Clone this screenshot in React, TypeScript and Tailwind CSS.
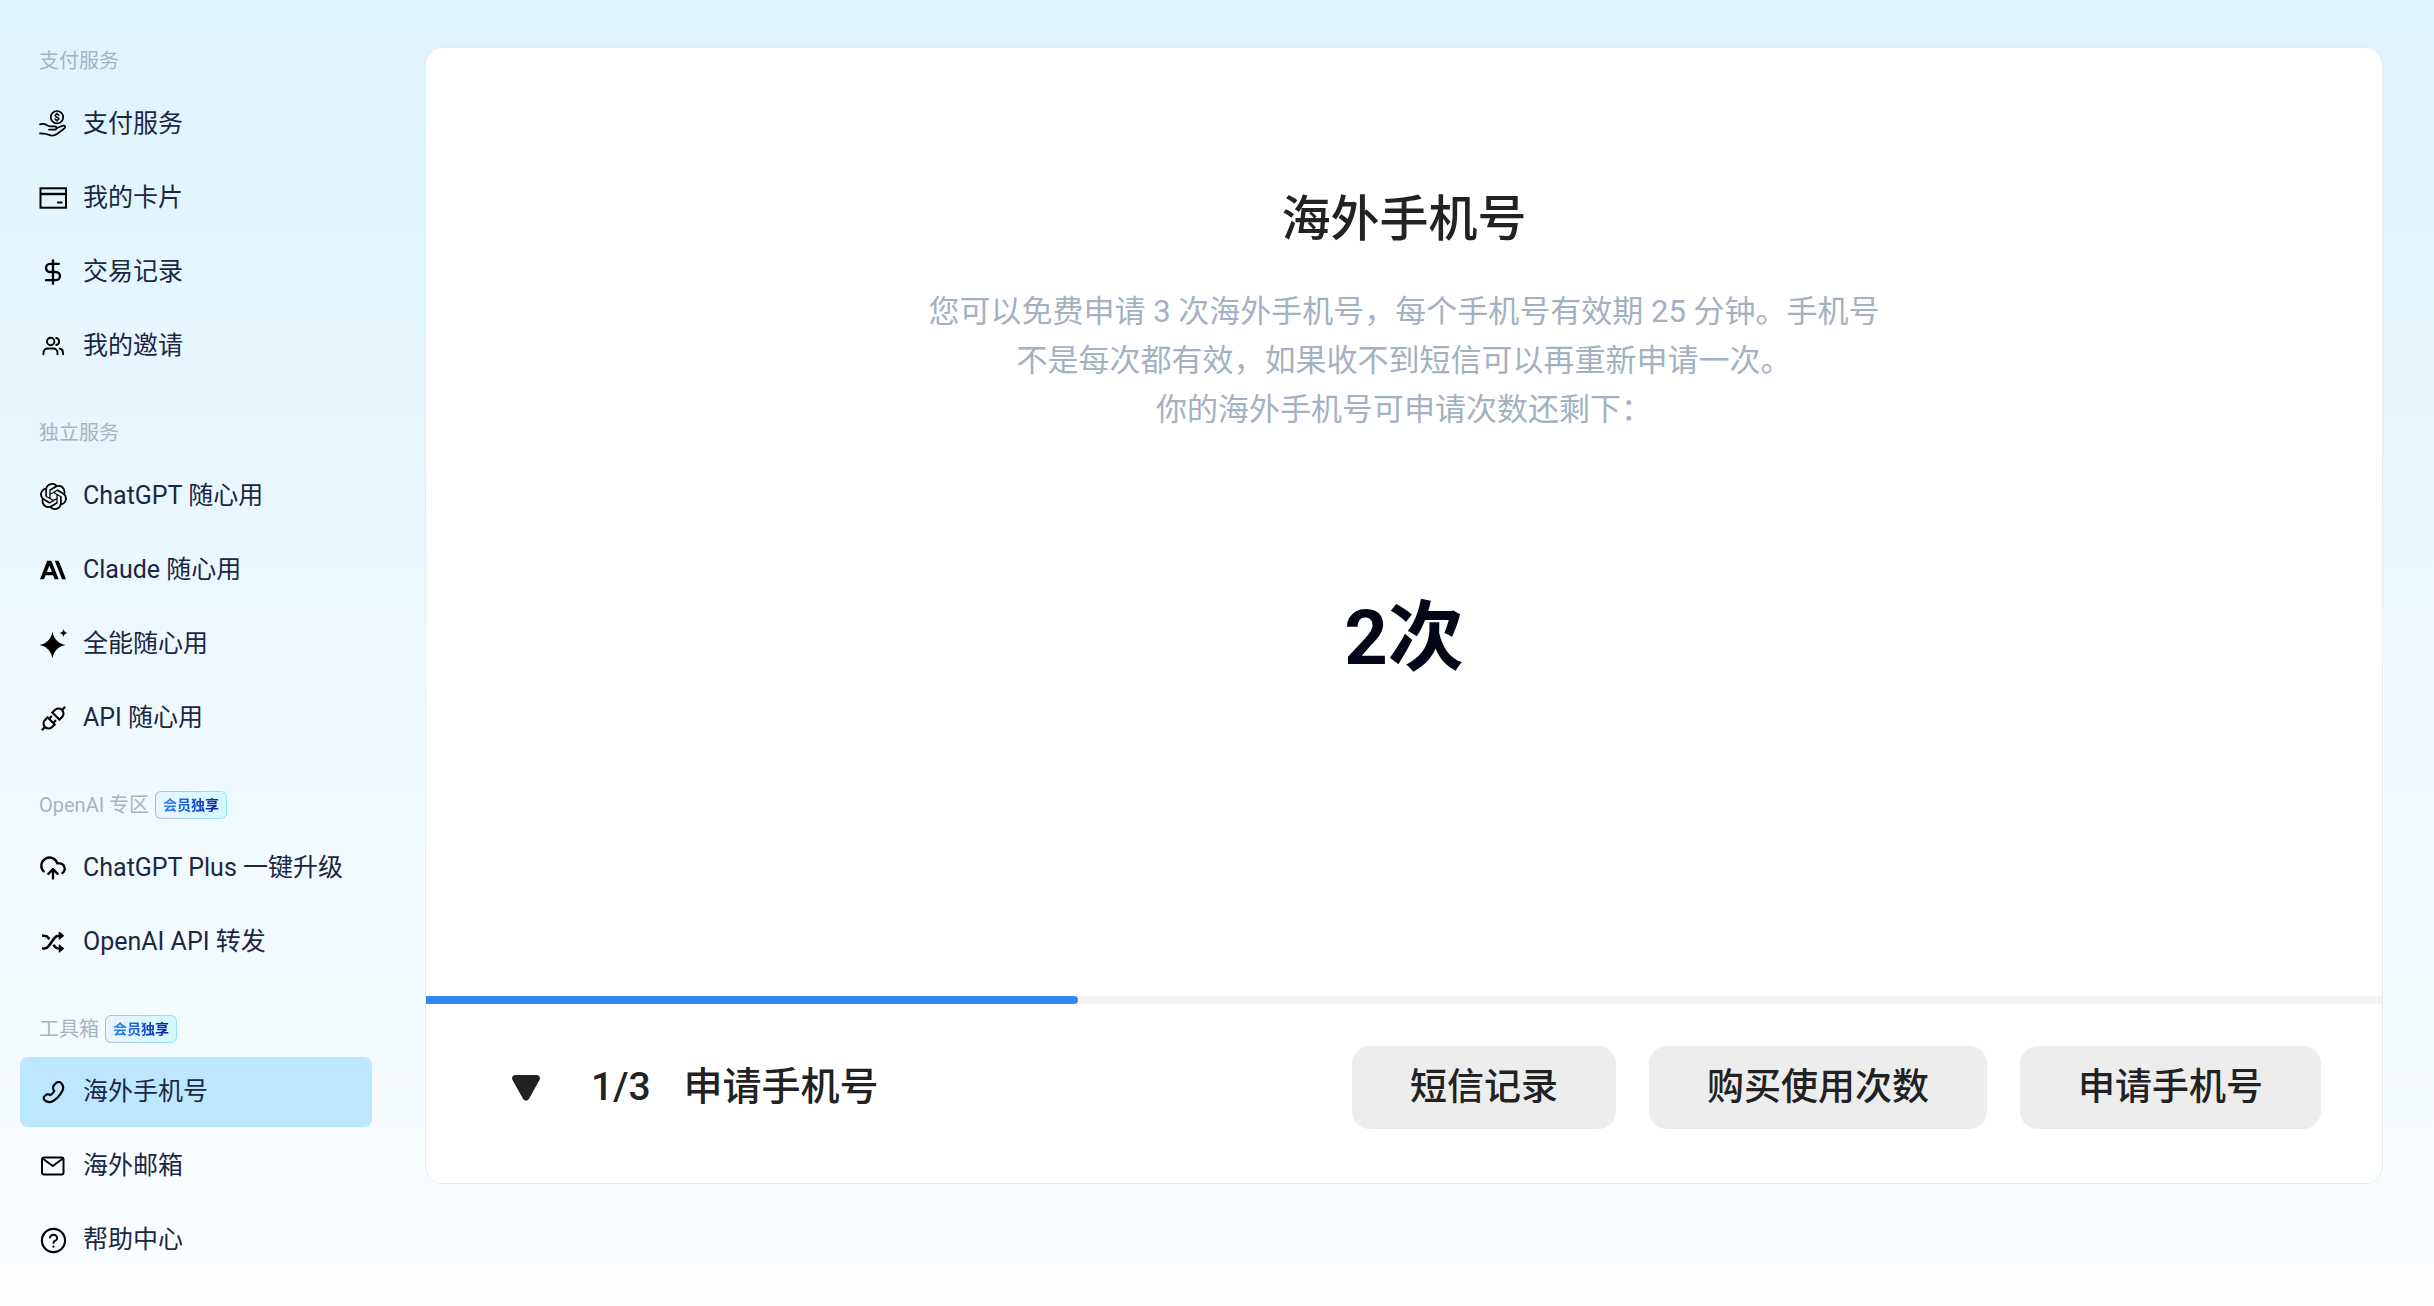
import type { ReactNode } from 'react';
import { CloudUpload, DollarSign } from 'lucide-react';
import { AiOutlineApi, AiOutlineQuestionCircle } from 'react-icons/ai';
import { SiAnthropic, SiOpenai } from 'react-icons/si';

type Item = { label: string; icon: ReactNode; active?: boolean };
type Group = { title: string; badge?: boolean; items: Item[] };

function HandCoinIcon() {
  return (
    <svg viewBox="0 0 28 28" className="size-7" fill="none" stroke="currentColor" strokeWidth="1.7" strokeLinecap="round" strokeLinejoin="round">
      <circle cx="18" cy="7.2" r="6.200" />
      <path strokeWidth="1.5" d="M19.800 5.300c-.4-.7-1-1-1.800-1-1 0-1.800.5-1.800 1.400 0 2 3.700 1 3.700 3 0 .9-.8 1.400-1.900 1.400-.9 0-1.600-.4-1.900-1.100M18 3.300v1M18 10.100v1" />
      <path d="M1 14.300c2.500-.6 5-.4 7 1 1.200.8 2 1 3.500 1h4c1.300 0 2 .7 2 1.600 0 1-.8 1.700-2 1.700H10" />
      <path d="M17.500 18.300l6-2.500c1-.4 2.300-.3 2.600.6.3.8 0 1.500-.8 2.100l-7 5.200c-2 1.400-4 2.200-6.500 1.700L7 24c-2-.4-4-.6-6-.6" />
    </svg>
  );
}

function CardIcon() {
  return (
    <svg viewBox="0 0 28 28" className="size-7" fill="none" stroke="currentColor" strokeWidth="2">
      <rect x="1.500" y="4.300" width="25.500" height="19.400" />
      <path strokeWidth="2.400" d="M1.500 10h25.500" />
      <path d="M18 18.500h5.500" />
    </svg>
  );
}

function PeopleIcon() {
  return (
    <svg viewBox="0 0 28 28" className="size-7" fill="none" stroke="currentColor" strokeWidth="1.900" strokeLinecap="round" strokeLinejoin="round">
      <circle cx="11.700" cy="9.500" r="3.700" />
      <path d="M4.500 22.200v-1.400c0-2.500 1.800-4.300 4.300-4.300h5.400c2.500 0 4.300 1.800 4.300 4.300v1.400" />
      <path d="M17.200 6c1.700.3 2.900 1.700 2.900 3.500s-1.200 3.200-2.900 3.500M20.700 16.500c2.200.6 3.300 2.200 3.300 4.300v1.400" />
    </svg>
  );
}

function SparkleIcon() {
  return (
    <svg viewBox="0 0 28 28" className="size-7 overflow-visible" fill="currentColor">
      <path d="M13.500 1.500c1.400 7.500 5 11.600 13 13.500-8 1.900-11.600 6-13 13.500C12.100 21 8.500 16.900.5 15c8-1.900 11.600-6 13-13.500z" />
      <path d="M24.500 -1c.5 2.300 1.500 3.500 4 4-2.500.5-3.500 1.700-4 4-.5-2.300-1.500-3.500-4-4 2.500-.5 3.500-1.700 4-4z" />
    </svg>
  );
}

function ShuffleIcon() {
  return (
    <svg viewBox="0 0 28 28" className="size-7" fill="none" stroke="currentColor" strokeWidth="2.600" strokeLinejoin="round">
      <path d="M3 20.500h2.200c2 0 3.300-.8 4.500-2.500l5.600-7.800c1.200-1.700 2.500-2.500 4.500-2.500H21" />
      <path d="M3 7.700h2.200c2 0 3.300.8 4.500 2.500l.7 1M14.400 16.700l.9 1.300c1.200 1.700 2.500 2.500 4.500 2.500H21" />
      <path fill="currentColor" strokeWidth="1" d="M20.200 4v7.400l4.600-3.700zM20.200 16.800v7.400l4.600-3.700z" />
    </svg>
  );
}

function HandsetIcon() {
  return (
    <svg viewBox="0 0 28 28" className="size-7" fill="none" stroke="currentColor" strokeWidth="2.100" strokeLinecap="round" strokeLinejoin="round">
      <path d="M15.300 6.700l1.800-1.800c1.700-1.500 4-1.100 5.400.6 2 2.300 2 5 .9 7.200-2 4.200-5 7.700-9.300 10.300-2.800 1.600-5.800 1.500-8.200-.6-1.600-1.500-1.700-3.200-.2-4.400l1.800-1.300c1.100-.8 2.100-.7 3 .1l.6.5c1.900-1 3.200-2.400 4.200-4.200l-.5-.9c-1-1.600-1-3.800.5-5.500z" />
    </svg>
  );
}

function EnvelopeIcon() {
  return (
    <svg viewBox="0 0 28 28" className="size-7" fill="none" stroke="currentColor" strokeWidth="2" strokeLinejoin="round">
      <rect x="3" y="5.500" width="21.500" height="17" rx="2" />
      <path d="M3.600 6.500l10.200 7.500L24 6.500" />
    </svg>
  );
}

const groups: Group[] = [
  {
    title: '支付服务',
    items: [
      { label: '支付服务', icon: <HandCoinIcon /> },
      { label: '我的卡片', icon: <CardIcon /> },
      { label: '交易记录', icon: <DollarSign size={28} strokeWidth={2} /> },
      { label: '我的邀请', icon: <PeopleIcon /> },
    ],
  },
  {
    title: '独立服务',
    items: [
      { label: 'ChatGPT 随心用', icon: <SiOpenai size={27} /> },
      { label: 'Claude 随心用', icon: <SiAnthropic size={26} /> },
      { label: '全能随心用', icon: <SparkleIcon /> },
      { label: 'API 随心用', icon: <AiOutlineApi size={31} className="shrink-0" /> },
    ],
  },
  {
    title: 'OpenAI 专区',
    badge: true,
    items: [
      { label: 'ChatGPT Plus 一键升级', icon: <CloudUpload size={28} strokeWidth={2} /> },
      { label: 'OpenAI API 转发', icon: <ShuffleIcon /> },
    ],
  },
  {
    title: '工具箱',
    badge: true,
    items: [
      { label: '海外手机号', icon: <HandsetIcon />, active: true },
      { label: '海外邮箱', icon: <EnvelopeIcon /> },
      { label: '帮助中心', icon: <AiOutlineQuestionCircle size={29} className="shrink-0" /> },
    ],
  },
];

function Badge() {
  return (
    <span className="flex h-7 items-center rounded-md bg-linear-to-r from-[#b9b4de] to-[#8fe9f5] p-px">
      <span className="flex h-full items-center rounded-[5px] bg-linear-to-r from-[#e9f5ff] to-[#cffafe] px-[7px]">
        <span className="bg-linear-to-r from-[#2f86f6] to-[#1512a8] bg-clip-text text-[14px] leading-5 font-bold text-transparent">
          会员独享
        </span>
      </span>
    </span>
  );
}

function NavGroup({ group }: { group: Group }) {
  return (
    <section>
      <h2 className="flex h-14 items-center gap-1.5 pl-[19px] text-[20px] text-[#a6b4c2]">
        {group.title}
        {group.badge && <Badge />}
      </h2>
      <ul className="flex flex-col gap-1">
        {group.items.map((item) => (
          <li key={item.label}>
            <a
              href="#"
              aria-current={item.active ? 'page' : undefined}
              className={`flex h-[70px] items-center gap-4 rounded-lg pl-[19px] text-[25px] text-[#1c2742] ${item.active ? 'bg-[#bde7ff]' : ''}`}
            >
              <span className="flex size-7 shrink-0 items-center justify-center text-black">{item.icon}</span>
              <span className="whitespace-nowrap">{item.label}</span>
            </a>
          </li>
        ))}
      </ul>
    </section>
  );
}

const actions = ['短信记录', '购买使用次数', '申请手机号'];

export default function App() {
  return (
    <div
      lang="zh-CN"
      className="flex min-h-screen items-start bg-[linear-gradient(180deg,#def4ff_0,#f9fdff_calc(100%-42px),#fdfdfd_calc(100%-42px))] font-['Roboto','Noto_Sans_CJK_SC',sans-serif]"
    >
      <nav className="flex w-[425px] shrink-0 flex-col gap-6 pt-[33px] pr-[53px] pl-5">
        {groups.map((g) => (
          <NavGroup key={g.title} group={g} />
        ))}
      </nav>

      <main className="mt-[47px] mr-[51px] flex-1 overflow-hidden rounded-[18px] border border-[#e6ebef] bg-white">
        <div className="flex flex-col items-center pt-[143px] pb-[312px] text-center">
          <h1 className="text-[49px] leading-[58px] font-medium text-[#222]">海外手机号</h1>
          <p className="mt-[38px] text-[31px] leading-[49px] text-[#a3b1c2]">
            您可以免费申请 3 次海外手机号，每个手机号有效期 25 分钟。手机号
            <br />
            不是每次都有效，如果收不到短信可以再重新申请一次。
            <br />
            你的海外手机号可申请次数还剩下：
          </p>
          <p className="mt-[158px] text-[76px] leading-[92px] font-bold text-[#020617]">2次</p>
        </div>

        <div role="progressbar" aria-valuenow={1} aria-valuemin={0} aria-valuemax={3} aria-label="申请进度" className="h-2 bg-[#f3f3f3]">
          <div className="h-full w-1/3 rounded-r-sm bg-[#3088ee]" />
        </div>

        <footer className="flex items-center justify-between pt-[42px] pr-[61px] pb-[54px] pl-[86px]">
          <div className="flex items-center text-[39px] font-medium text-[#222]">
            <button type="button" aria-label="展开步骤" className="mr-[51px]">
              <svg viewBox="0 0 28 26" className="h-[26px] w-7" fill="currentColor">
                <path d="M3.500 0h21c2.800 0 4.200 2.600 3 5L17 23.800c-1.400 2.600-4.600 2.600-6 0L.5 5C-.7 2.600.7 0 3.500 0z" />
              </svg>
            </button>
            <span className="mr-[33px]">1/3</span>
            <span>申请手机号</span>
          </div>
          <div className="flex gap-[33px]">
            {actions.map((a) => (
              <button key={a} type="button" className="h-[83px] rounded-[18px] bg-[#ededed] px-[58px] text-[37px] font-medium text-[#222]">
                {a}
              </button>
            ))}
          </div>
        </footer>
      </main>
    </div>
  );
}
